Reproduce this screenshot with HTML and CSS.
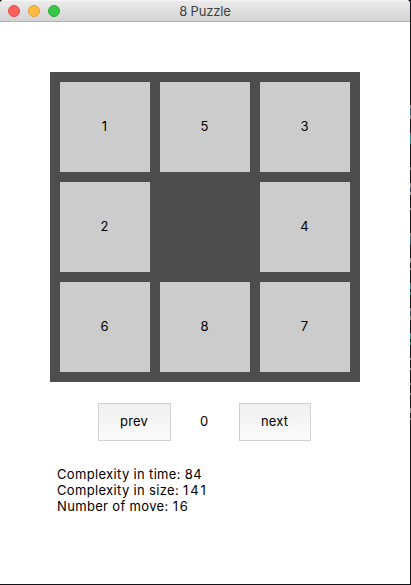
FILE: index.html
```html
<!DOCTYPE html>
<html lang="en">
<head>
<meta charset="utf-8">
<title>8 Puzzle</title>
<link rel="stylesheet" href="styles.css">
</head>
<body>
<main class="window">
  <header class="titlebar">
    <div class="lights"><i class="light close"></i><i class="light minimize"></i><i class="light zoom"></i></div>
    <h1 class="title">8 Puzzle</h1>
  </header>
  <section class="board">
    <div class="tile">1</div><div class="tile">5</div><div class="tile">3</div>
    <div class="tile">2</div><div></div><div class="tile">4</div>
    <div class="tile">6</div><div class="tile">8</div><div class="tile">7</div>
  </section>
  <nav class="controls">
    <button class="button prev">prev</button>
    <span class="step">0</span>
    <button class="button next">next</button>
  </nav>
  <section class="stats">
    <p>Complexity in time: <span class="time">84</span></p>
    <p>Complexity in size: <span class="size">141</span></p>
    <p>Number of move: <span class="moves">16</span></p>
  </section>
</main>
<div class="desktop-edge"></div>
</body>
</html>
```
FILE: styles.css
```css
* { box-sizing: border-box; }
body {
  margin: 0;
  display: grid;
  grid-template-columns: 410px 1px;
  width: 411px;
  height: 585px;
  overflow: hidden;
  background: #141417;
  font: 13px/16px Inter, "Liberation Sans", sans-serif;
  color: #000;
}
.window {
  width: 410px;
  height: 584px;
  background: #fff;
  border-radius: 4px 4px 0 0;
  overflow: hidden;
}
.titlebar {
  display: grid;
  grid-template-columns: 60px 290px 60px;
  align-items: center;
  height: 22px;
  border-top: 1px solid #f5f5f5;
  border-bottom: 1px solid #b1b1b1;
  background: linear-gradient(#ebebeb, #d3d3d3);
}
.lights { display: flex; gap: 8px; padding-left: 8px; }
.light { width: 12px; height: 12px; border-radius: 50%; border: 1px solid; }
.close { background: #fc605c; border-color: #e2504c; }
.minimize { background: #fdbc40; border-color: #dfa036; }
.zoom { background: #34c84a; border-color: #2cad3b; }
.title {
  margin: 0;
  text-align: center;
  font-size: 13px;
  font-weight: 400;
  letter-spacing: -.15px;
  color: #404040;
}
.board {
  display: grid;
  grid-template-columns: repeat(3, 90px);
  grid-template-rows: repeat(3, 90px);
  gap: 10px;
  width: 310px;
  height: 310px;
  margin: 50px 0 0 50px;
  padding: 10px;
  background: #4d4d4d;
}
.tile {
  display: flex;
  align-items: center;
  justify-content: center;
  padding: 0 1px 2px 0;
  background: #ccc;
}
.controls {
  display: grid;
  grid-template-columns: 73px 68px 72px;
  height: 38px;
  margin: 21px 0 0 98px;
  align-items: center;
}
.button {
  height: 38px;
  padding: 0 1px 2px 0;
  border: 1px solid #d2d2d2;
  background: linear-gradient(#f0f0f0, #fbfbfb);
  font: inherit;
  letter-spacing: .15px;
  color: #000;
}
.step { text-align: center; padding: 0 2px 2px 0; }
.stats { margin: 25px 0 0 57px; letter-spacing: .34px; }
.stats p { margin: 0; }
.size { letter-spacing: 2px; }
.moves { letter-spacing: 1.8px; }
.desktop-edge {
  width: 1px;
  background: linear-gradient(#141417 105px, #7b8794 105px 108px, #28516f 108px 115px, #7b8794 115px 119px, #141417 119px 133px, #1a808c 133px 144px, #141417 144px 167px, #777 167px 170px, #141417 170px 183px, #888 183px 187px, #2b3967 187px 192px, #888 192px 195px, #141417 195px 208px, #888 208px 210px, #141417 210px 233px, #777 233px 236px, #28617a 236px 245px, #141417 245px 258px, #888 258px 263px, #141417 263px 268px, #999 268px 270px, #141417 270px 283px, #1e86a8 283px 289px, #141417 289px 292px, #25817b 292px 295px, #141417 295px 308px, #888 308px 311px, #2b3967 311px 316px, #888 316px 320px, #141417 320px 333px, #1a928c 333px 339px, #141417 339px 342px, #25917b 342px 345px, #141417 345px 358px, #888 358px 360px, #141417 360px 368px, #888 368px 370px, #141417 370px 383px, #888 383px 385px, #141417 385px 393px, #888 393px 395px, #141417 395px 408px, #888 408px 413px, #141417 413px 418px, #888 418px 420px, #141417 420px);
}
```
